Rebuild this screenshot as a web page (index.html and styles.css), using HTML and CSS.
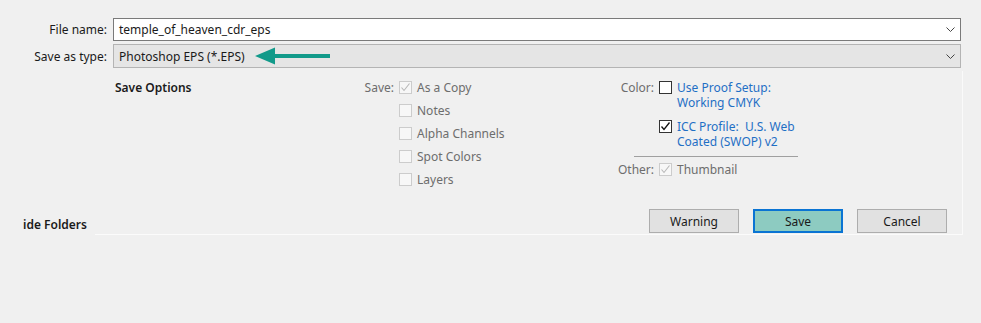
FILE: index.html
```html
<!DOCTYPE html>
<html lang="en">
<head>
    <meta charset="UTF-8">
    <title>Save As</title>
    <link rel="stylesheet" href="styles.css">
</head>
<body>
    <div class="dialog">
        <div class="field">
            <label class="field-label">File name:</label>
            <div class="box box-input">
                <span>temple_of_heaven_cdr_eps</span>
                <svg class="chevron" width="9" height="5" viewBox="0 0 9 5"><path d="M0.5 0.5 L4.5 4.5 L8.5 0.5" fill="none" stroke="#444" stroke-width="1"/></svg>
            </div>
        </div>
        <div class="field">
            <label class="field-label">Save as type:</label>
            <div class="box box-select">
                <span>Photoshop EPS (*.EPS)</span>
                <!-- callout arrow -->
                <svg class="callout" width="76" height="18" viewBox="0 0 76 18"><path d="M0 9 L20 0.5 L20 7 L75 7 L75 11 L20 11 L20 17.5 Z" fill="#129a8a"/></svg>
                <svg class="chevron" width="9" height="5" viewBox="0 0 9 5"><path d="M0.5 0.5 L4.5 4.5 L8.5 0.5" fill="none" stroke="#444" stroke-width="1"/></svg>
            </div>
        </div>

        <div class="panel">
            <div class="options">
                <div class="options-title">Save Options</div>

                <div class="group save-group">
                    <div class="opt">
                        <span class="opt-label">Save:</span>
                        <span class="check disabled checked"><svg width="11" height="11" viewBox="0 0 11 11"><path d="M1.5 5.5 L4 8.5 L9.5 1.5" fill="none" stroke="currentColor" stroke-width="1.1"/></svg></span>
                        <span class="opt-text">As a Copy</span>
                    </div>
                    <div class="opt">
                        <span class="opt-label"></span>
                        <span class="check disabled"></span>
                        <span class="opt-text">Notes</span>
                    </div>
                    <div class="opt">
                        <span class="opt-label"></span>
                        <span class="check disabled"></span>
                        <span class="opt-text">Alpha Channels</span>
                    </div>
                    <div class="opt">
                        <span class="opt-label"></span>
                        <span class="check disabled"></span>
                        <span class="opt-text">Spot Colors</span>
                    </div>
                    <div class="opt">
                        <span class="opt-label"></span>
                        <span class="check disabled"></span>
                        <span class="opt-text">Layers</span>
                    </div>
                </div>

                <div class="group color-group">
                    <div class="copt">
                        <span class="opt-label">Color:</span>
                        <span class="check"></span>
                        <span class="opt-text link">Use Proof Setup:<br>Working CMYK</span>
                    </div>
                    <div class="copt copt-icc">
                        <span class="opt-label"></span>
                        <span class="check"><svg width="11" height="11" viewBox="0 0 11 11"><path d="M1.5 5.5 L4 8.5 L9.5 1.5" fill="none" stroke="currentColor" stroke-width="1.3"/></svg></span>
                        <span class="opt-text link">ICC Profile:&nbsp; U.S. Web<br>Coated (SWOP) v2</span>
                    </div>
                    <div class="divider"></div>
                    <div class="copt">
                        <span class="opt-label">Other:</span>
                        <span class="check disabled checked"><svg width="11" height="11" viewBox="0 0 11 11"><path d="M1.5 5.5 L4 8.5 L9.5 1.5" fill="none" stroke="currentColor" stroke-width="1.1"/></svg></span>
                        <span class="opt-text muted">Thumbnail</span>
                    </div>
                </div>
            </div>

            <div class="footer">
                <span class="hide-folders">ide Folders</span>
                <div class="buttons">
                    <button class="btn">Warning</button>
                    <button class="btn btn-primary">Save</button>
                    <button class="btn">Cancel</button>
                </div>
            </div>
        </div>
    </div>
</body>
</html>
```

FILE: styles.css
```css
body {
    margin: 0;
    background: #f0f0f0;
    font-family: "Noto Sans", "Open Sans", sans-serif;
    font-size: 12px;
    color: #1a1a1a;
}

.dialog {
    padding-top: 18px;
    width: 963px;
}

.field {
    display: flex;
    align-items: center;
    margin-bottom: 3px;
}

.field-label {
    width: 107px;
    text-align: right;
    padding-right: 6px;
    color: #1a1a1a;
}

.box {
    flex: 1;
    height: 21px;
    margin-right: 2px;
    display: flex;
    align-items: center;
    padding-left: 5px;
    padding-right: 5px;
}

.box-input {
    background: #fff;
    border: 1px solid #7a7a7a;
}

.box-select {
    background: #e5e5e5;
    border: 1px solid #b4b4b4;
    height: 22px;
}

.callout {
    margin-left: 10px;
}

.chevron {
    margin-left: auto;
}

.panel {
    border-right: 1px solid #fafafa;
}

.options {
    display: flex;
    padding-left: 115px;
    padding-top: 5px;
}

.options-title {
    width: 225px;
    font-weight: 600;
    line-height: 23px;
}

.group {
    display: flex;
    flex-direction: column;
}

.save-group {
    width: 260px;
}

.opt,
.copt {
    display: flex;
    align-items: flex-start;
}

.opt {
    line-height: 23px;
}

.opt .check {
    margin-top: 5px;
}

.color-group {
    padding-top: 4px;
}

.copt {
    line-height: 15px;
}

.copt .check {
    margin-top: 1px;
}

.copt-icc {
    margin-top: 9px;
}

.opt-label {
    width: 54px;
    text-align: right;
    color: #6d6d6d;
}

.check {
    width: 11px;
    height: 11px;
    border: 1px solid #333;
    background: #fff;
    margin-left: 5px;
    margin-right: 5px;
    flex: none;
    color: #111;
    display: flex;
}

.check.disabled {
    border-color: #cccccc;
    background: #f7f7f7;
    color: #b8b8b8;
}

.opt-text {
    color: #6d6d6d;
}

.opt-text.link {
    color: #1f6fc5;
}

.opt-text.muted {
    color: #6d6d6d;
}

.divider {
    height: 1px;
    background: #a0a0a0;
    width: 164px;
    margin-left: 34px;
    margin-top: 7px;
    margin-bottom: 5px;
}

.footer {
    display: flex;
    align-items: center;
    margin-top: 18px;
    padding-bottom: 2px;
    padding-right: 15px;
    background: linear-gradient(#fbfbfb, #fbfbfb) no-repeat 95px 100% / calc(100% - 95px) 1px;
}

.hide-folders {
    padding-left: 23px;
    padding-top: 6px;
    font-weight: 600;
    color: #1a1a1a;
}

.buttons {
    margin-left: auto;
    display: flex;
    gap: 14px;
}

.btn {
    width: 90px;
    height: 24px;
    border: 1px solid #adadad;
    background: #e1e1e1;
    font-family: inherit;
    font-size: 12px;
    color: #1a1a1a;
    padding: 0;
}

.btn-primary {
    background: #8dcbc1;
    border: 2px solid #0a74d3;
}
```
